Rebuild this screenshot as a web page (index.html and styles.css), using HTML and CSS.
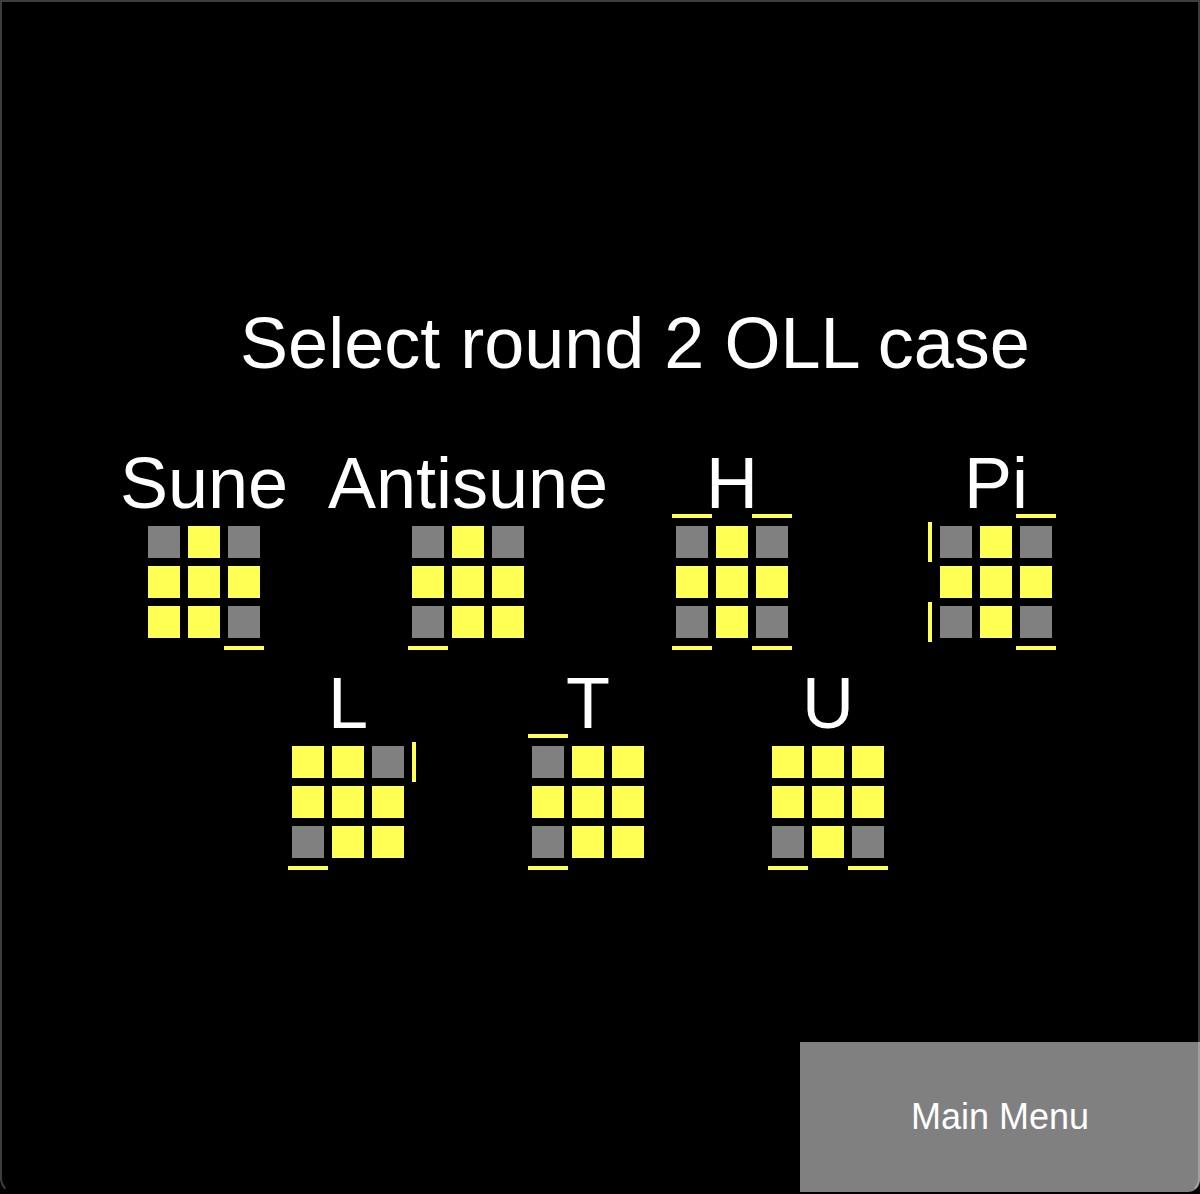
FILE: index.html
```html
<!DOCTYPE html>
<html lang="en">
<head>
<meta charset="utf-8">
<meta name="viewport" content="width=device-width, initial-scale=1">
<title>Select OLL case</title>
<link rel="stylesheet" href="styles.css">
</head>
<body>
<svg class="defs" aria-hidden="true">
  <symbol id="grid" viewBox="0 0 136 136">
    <path d="M12 12h32v32h-32zM52 12h32v32h-32zM92 12h32v32h-32zM12 52h32v32h-32zM52 52h32v32h-32zM92 52h32v32h-32zM12 92h32v32h-32zM52 92h32v32h-32zM92 92h32v32h-32z"/>
  </symbol>
</svg>
<div class="window">
  <main class="picker">
    <h1 class="title">Select round 2 OLL case</h1>
    <div class="row row-four">
      <button class="case" type="button">
        <span class="name">Sune</span>
        <svg class="board" viewBox="0 0 136 136" aria-hidden="true">
          <use href="#grid"/>
          <path class="off" d="M12 12h32v32h-32zM92 12h32v32h-32zM92 92h32v32h-32z"/>
          <path d="M88 132h40v4h-40z"/>
        </svg>
      </button>
      <button class="case" type="button">
        <span class="name">Antisune</span>
        <svg class="board" viewBox="0 0 136 136" aria-hidden="true">
          <use href="#grid"/>
          <path class="off" d="M12 12h32v32h-32zM92 12h32v32h-32zM12 92h32v32h-32z"/>
          <path d="M8 132h40v4h-40z"/>
        </svg>
      </button>
      <button class="case" type="button">
        <span class="name">H</span>
        <svg class="board" viewBox="0 0 136 136" aria-hidden="true">
          <use href="#grid"/>
          <path class="off" d="M12 12h32v32h-32zM92 12h32v32h-32zM12 92h32v32h-32zM92 92h32v32h-32z"/>
          <path d="M8 0h40v4h-40zM88 0h40v4h-40zM8 132h40v4h-40zM88 132h40v4h-40z"/>
        </svg>
      </button>
      <button class="case" type="button">
        <span class="name">Pi</span>
        <svg class="board" viewBox="0 0 136 136" aria-hidden="true">
          <use href="#grid"/>
          <path class="off" d="M12 12h32v32h-32zM92 12h32v32h-32zM12 92h32v32h-32zM92 92h32v32h-32z"/>
          <path d="M0 8h4v40h-4zM0 88h4v40h-4zM88 0h40v4h-40zM88 132h40v4h-40z"/>
        </svg>
      </button>
    </div>
    <div class="row row-three">
      <button class="case" type="button">
        <span class="name">L</span>
        <svg class="board" viewBox="0 0 136 136" aria-hidden="true">
          <use href="#grid"/>
          <path class="off" d="M92 12h32v32h-32zM12 92h32v32h-32z"/>
          <path d="M132 8h4v40h-4zM8 132h40v4h-40z"/>
        </svg>
      </button>
      <button class="case" type="button">
        <span class="name">T</span>
        <svg class="board" viewBox="0 0 136 136" aria-hidden="true">
          <use href="#grid"/>
          <path class="off" d="M12 12h32v32h-32zM12 92h32v32h-32z"/>
          <path d="M8 0h40v4h-40zM8 132h40v4h-40z"/>
        </svg>
      </button>
      <button class="case" type="button">
        <span class="name">U</span>
        <svg class="board" viewBox="0 0 136 136" aria-hidden="true">
          <use href="#grid"/>
          <path class="off" d="M12 92h32v32h-32zM92 92h32v32h-32z"/>
          <path d="M8 132h40v4h-40zM88 132h40v4h-40z"/>
        </svg>
      </button>
    </div>
  </main>
  <button class="menu" type="button">Main Menu</button>
</div>
</body>
</html>
```

FILE: styles.css
```css
* {
  box-sizing: border-box;
}

body {
  margin: 0;
  background: #000;
  color: #fff;
  font-family: "Liberation Sans", Arial, sans-serif;
}

.defs {
  display: none;
}

.window {
  position: relative;
  display: flex;
  flex-direction: column;
  min-height: 100vh;
  padding-bottom: 2px;
}

/* translucent window edge, drawn over the content */
.window::after {
  content: "";
  position: absolute;
  inset: 0;
  border: 2px solid rgba(255, 255, 255, 0.24);
  border-bottom-color: transparent;
  border-radius: 0 0 16px 16px;
  pointer-events: none;
}

.picker {
  flex: 1;
  padding: 312px 0 48px;
}

.title {
  margin: 0 0 78px;
  padding-left: 70px;
  font-size: 72px;
  font-weight: 400;
  line-height: 62px;
  text-align: center;
}

.row {
  display: grid;
}

.row-four {
  grid-template-columns: repeat(4, minmax(0, 1fr));
  margin: 0 6%;
}

.row-three {
  grid-template-columns: repeat(3, minmax(0, 1fr));
  margin: 22px 21% 0 19%;
}

.case {
  display: flex;
  flex-direction: column;
  align-items: center;
  padding: 0;
  border: 0;
  background: none;
  color: inherit;
  font: inherit;
  cursor: pointer;
}

.name {
  font-size: 72px;
  line-height: 62px;
}

.board {
  display: block;
  width: 136px;
  height: 136px;
  fill: #ffff54;
}

.off {
  fill: #808080;
}

.menu {
  align-self: flex-end;
  width: calc(100% / 3);
  height: 150px;
  padding: 0;
  border: 0;
  border-bottom-right-radius: 12px;
  background: #808080;
  color: #fff;
  font-family: inherit;
  font-size: 36px;
  cursor: pointer;
}
```
